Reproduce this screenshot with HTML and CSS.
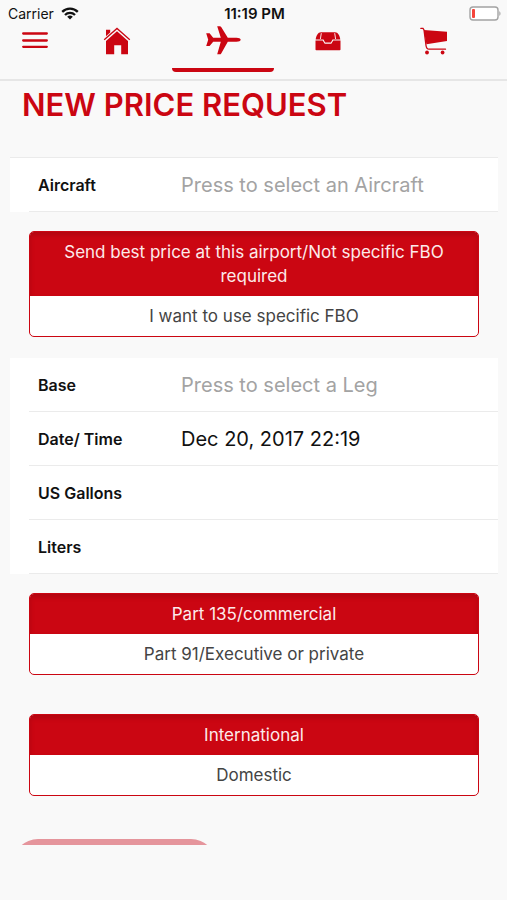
FILE: index.html
```html
<!DOCTYPE html>
<html lang="en">
<head>
    <meta charset="UTF-8">
    <meta name="viewport" content="width=device-width, initial-scale=1.0">
    <title>New Price Request</title>
    <link rel="stylesheet" href="styles.css">
</head>
<body>
    <header class="header">
        <div class="status-bar">
            <div class="carrier">
                <span>Carrier</span>
                <svg width="18" height="13" viewBox="0 0 18 13" fill="none" stroke="#111" stroke-width="2.3">
                    <path d="M1.2 4.9a11 11 0 0 1 15.6 0"/>
                    <path d="M4 8a7 7 0 0 1 10 0"/>
                    <path d="M9 12.6L6.2 9.8a4 4 0 0 1 5.6 0z" fill="#111" stroke="none"/>
                </svg>
            </div>
            <span class="clock">11:19 PM</span>
            <svg class="battery" width="32" height="15" viewBox="0 0 32 15">
                <rect x="1" y="1" width="28" height="13" rx="3" fill="#fff" stroke="#a3a3a3" stroke-width="1.4"/>
                <rect x="3" y="3" width="3" height="9" rx="1" fill="#f4443a"/>
                <path d="M30.3 5.2c1.6.6 1.6 4 0 4.6z" fill="#a3a3a3"/>
            </svg>
        </div>
        <nav class="tabs">
            <button type="button" class="menu-button" aria-label="Menu">
                <svg width="26" height="30" viewBox="0 0 26 30" stroke="#cb0612" stroke-width="2.3" stroke-linecap="round">
                    <path d="M1.2 7.5h23.6M1.2 14.5h23.6M1.2 20.8h23.6"/>
                </svg>
            </button>
            <a href="#home" class="tab" aria-label="Home">
                <svg width="28" height="30" viewBox="0 0 28 30" fill="#cb0612">
                    <path d="M3 3.8h4.2v2.6L3 10.3z"/>
                    <path d="M14 5.2L25 15v13.3h-6.8v-9h-7v9H3V15z"/>
                    <path d="M1.2 13.8L14 2.4l12.8 11.4" fill="none" stroke="#cb0612" stroke-width="1.3"/>
                </svg>
            </a>
            <a href="#price" class="tab active" aria-label="Price request">
                <svg width="36" height="30" viewBox="0 0 36 30" fill="#cb0612">
                    <path d="M12.2.2h2.6q.9 0 1.400.8l6.600 10.700h8.700c2.300 0 4.200.9 4.200 2s-1.900 2-4.200 2h-8.700l-6.600 11.700q-.5.900-1.400.9h-2.600l3.600-12.600H8.200l-3.600 4.300H1.200l2-6.300L1.200 7.200h3.400l3.600 4.500h7.600z"/>
                </svg>
            </a>
            <a href="#inbox" class="tab" aria-label="Inbox">
                <svg width="26" height="30" viewBox="0 0 26 30" fill="#cb0612">
                    <path d="M6 6.200h14c3 0 4.800 3.600 5.300 7.200H17.500l-1.600 3.200h-5.800l-1.600-3.200H.7C1.200 9.800 3 6.200 6 6.200z"/>
                    <path d="M.5 14.400h7.200l2 3.300h6.600l2-3.300h7.200v9a.8.800 0 0 1-.8.800H1.300a.8.800 0 0 1-.8-.8z"/>
                    <path d="M6.300 7.200L5.400 13M19.700 7.200l.9 5.800" stroke="#fbe3e4" stroke-width="1"/>
                </svg>
            </a>
            <a href="#cart" class="tab" aria-label="Cart">
                <svg width="28" height="30" viewBox="0 0 28 30" fill="#cb0612">
                    <path d="M3.800 4L27 5.800V15L6.400 18.200z"/>
                    <path d="M.8 2.300h2.200l1 1.700L6 19.500c.3 2.600 1.200 3.700 3 3.700H25.500" fill="none" stroke="#cb0612" stroke-width="1.300" stroke-linecap="round"/>
                    <circle cx="7" cy="26.500" r="1.900"/>
                    <circle cx="22.600" cy="26.500" r="1.900"/>
                </svg>
            </a>
        </nav>
    </header>
    <main class="content">
        <h1>NEW PRICE REQUEST</h1>
        <form>
            <div class="list list-top">
                <div class="row">
                    <label for="aircraft">Aircraft</label>
                    <input type="text" id="aircraft" placeholder="Press to select an Aircraft" readonly>
                </div>
            </div>
            <div class="toggle" role="radiogroup" aria-label="FBO">
                <label class="option">
                    <input type="radio" name="fbo" checked>
                    <span>Send best price at this airport/Not specific FBO required</span>
                </label>
                <label class="option">
                    <input type="radio" name="fbo">
                    <span>I want to use specific FBO</span>
                </label>
            </div>
            <div class="list">
                <div class="row">
                    <label for="base">Base</label>
                    <input type="text" id="base" placeholder="Press to select a Leg" readonly>
                </div>
                <div class="row">
                    <label for="date">Date/ Time</label>
                    <input type="text" id="date" value="Dec 20, 2017 22:19">
                </div>
                <div class="row">
                    <label for="gallons">US Gallons</label>
                    <input type="text" id="gallons" inputmode="decimal">
                </div>
                <div class="row">
                    <label for="liters">Liters</label>
                    <input type="text" id="liters" inputmode="decimal">
                </div>
            </div>
            <div class="toggle" role="radiogroup" aria-label="Operation">
                <label class="option">
                    <input type="radio" name="operation" checked>
                    <span>Part 135/commercial</span>
                </label>
                <label class="option">
                    <input type="radio" name="operation">
                    <span>Part 91/Executive or private</span>
                </label>
            </div>
            <div class="toggle toggle-last" role="radiogroup" aria-label="Flight">
                <label class="option">
                    <input type="radio" name="flight" checked>
                    <span>International</span>
                </label>
                <label class="option">
                    <input type="radio" name="flight">
                    <span>Domestic</span>
                </label>
            </div>
            <button type="submit" class="submit-button" aria-label="Submit" disabled></button>
        </form>
    </main>
</body>
</html>
```

FILE: styles.css
```css
* {
    box-sizing: border-box;
}
body {
    font-family: Inter, "Liberation Sans", sans-serif;
    margin: 0;
    background-color: #f9f9f9;
    color: #111;
    display: flex;
    flex-direction: column;
    height: 100vh;
    padding-bottom: 55px;
}
svg {
    display: block;
}
.header {
    border-bottom: 2px solid #e6e6e6;
}
.status-bar {
    display: grid;
    grid-template-columns: 1fr auto 1fr;
    align-items: center;
    height: 26px;
    padding: 1px 6px 0 8px;
    font-size: 14px;
}
.carrier {
    display: flex;
    align-items: center;
    gap: 7px;
}
.clock {
    font-size: 15px;
    font-weight: 600;
}
.battery {
    justify-self: end;
}
.tabs {
    display: grid;
    grid-template-columns: 42px repeat(4, 1fr);
    height: 53px;
    padding: 0 20px 0 22px;
}
.menu-button {
    display: flex;
    align-items: flex-start;
    background: none;
    border: none;
    padding: 0;
    cursor: pointer;
}
.tab {
    display: flex;
    flex-direction: column;
    align-items: center;
    justify-content: space-between;
    margin: 0 2px;
    padding-bottom: 7px;
}
.tab.active::after {
    content: "";
    width: 100%;
    height: 4px;
    background-color: #cb0612;
    border-radius: 0 0 5px 5px;
}
.content {
    flex: 1;
    overflow-y: auto;
    scrollbar-width: none;
}
h1 {
    margin: 4px 22px 32px;
    font-size: 31px;
    line-height: 40px;
    font-weight: 600;
    color: #cb0612;
}
.list {
    margin: 0 9px 0 10px;
    padding-left: 19px;
    background-color: #fff;
}
.list-top {
    border-top: 1px solid #ebebeb;
}
.row {
    display: flex;
    align-items: center;
    height: 54px;
    padding-left: 9px;
    border-bottom: 1px solid #ebebeb;
}
.row label {
    flex: none;
    width: 143px;
    font-size: 16px;
    font-weight: 600;
}
.row input {
    flex: 1;
    min-width: 0;
    padding: 0;
    border: none;
    outline: none;
    background: none;
    color: #111;
    font-family: inherit;
    font-size: 20px;
}
.row input::placeholder {
    color: #a3a3a3;
}
.toggle {
    margin: 19px 28px 21px 29px;
    border: 1px solid #cb0612;
    border-radius: 5px;
    background-color: #fff;
    overflow: hidden;
}
.toggle-last {
    margin-top: 39px;
    margin-bottom: 43px;
}
.option {
    display: block;
    position: relative;
    font-size: 17px;
    line-height: 24px;
    text-align: center;
    color: #444;
    cursor: pointer;
}
.option input {
    position: absolute;
    opacity: 0;
    margin: 0;
}
.option span {
    display: block;
    padding: 8px 24px;
}
.option input:checked + span {
    background-color: #cb0612;
    color: #fdeaea;
    box-shadow: inset 0 3px 5px rgba(0, 0, 0, 0.13);
}
.submit-button {
    display: block;
    width: 40%;
    height: 50px;
    margin-left: 13px;
    border: none;
    border-radius: 25px;
    background-color: #e5959c;
}
```
